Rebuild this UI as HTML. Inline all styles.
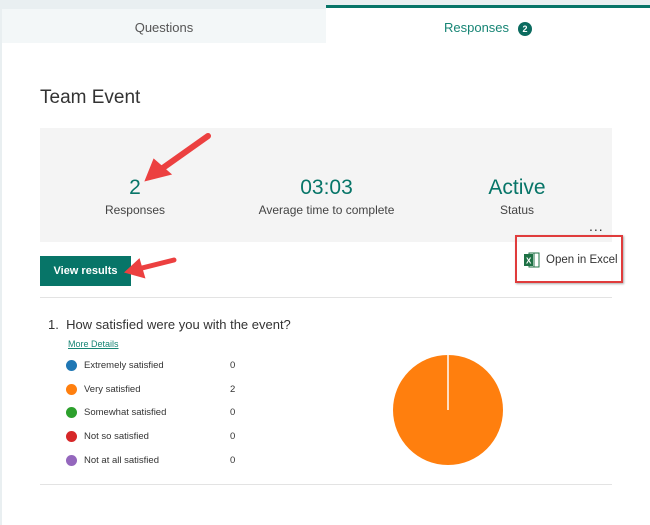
<!DOCTYPE html>
<html><head><style>
body{margin:0;width:650px;height:525px;background:#fff;font-family:"Liberation Sans",sans-serif;position:relative;overflow:hidden}
.a{position:absolute}
.c{text-align:center;color:#333}
.n{font-size:21px;color:#077568}
.l{font-size:12px;color:#444}
.row{position:absolute;left:66px;font-size:9.5px;color:#333}
.dot{display:inline-block;width:11px;height:11px;border-radius:50%;vertical-align:middle;margin-right:7px}
.v{position:absolute;left:164px}
</style></head><body>
<div class="a" style="left:0;top:0;width:650px;height:43px;background:#e9eff1"></div>
<div class="a" style="left:2px;top:9px;width:324px;height:34px;background:#f3f7f8;color:#555;font-size:13px;text-align:center;line-height:38px">Questions</div>
<div class="a" style="left:326px;top:5px;width:324px;height:3px;background:#077568"></div>
<div class="a" style="left:326px;top:8px;width:324px;height:35px;background:#fff;color:#178575;font-size:13px;line-height:40px"><span style="position:absolute;left:118px">Responses</span><span style="position:absolute;left:192px;top:14px;width:14px;height:14px;border-radius:50%;background:#0b6b5f;color:#fff;font-size:9px;font-weight:bold;line-height:14px;text-align:center">2</span></div>
<div class="a" style="left:0;top:43px;width:2px;height:482px;background:#e9eff1"></div>
<div class="a" style="left:40px;top:87px;font-size:19px;color:#333">Team Event</div>
<div class="a" style="left:40px;top:128px;width:572px;height:114px;background:#f4f4f4"></div>
<div class="a c" style="left:60px;top:176px;width:150px"><div class="n">2</div><div class="l" style="margin-top:3px">Responses</div></div>
<div class="a c" style="left:250px;top:176px;width:153px"><div class="n">03:03</div><div class="l" style="margin-top:3px">Average time to complete</div></div>
<div class="a c" style="left:442px;top:176px;width:150px"><div class="n">Active</div><div class="l" style="margin-top:3px">Status</div></div>
<div class="a" style="left:589px;top:218px;font-size:14px;color:#333;letter-spacing:1px">...</div>
<div class="a" style="left:40px;top:256px;width:91px;height:30px;background:#077568;color:#fff;font-size:11px;font-weight:bold;line-height:30px;text-align:center">View results</div>
<div class="a" style="left:515px;top:235px;width:104px;height:44px;border:2px solid #e03c3c;box-shadow:1px 1px 2px #aaa"></div>
<svg class="a" style="left:524px;top:252px" width="16" height="16"><rect x="5" y="1" width="10" height="14" fill="#fff" stroke="#217346"/><line x1="10" y1="1" x2="10" y2="15" stroke="#217346"/><rect x="0" y="2" width="9" height="12" fill="#1e7145"/><text x="2" y="11.5" font-size="8" fill="#fff" font-weight="bold" font-family="Liberation Sans">X</text></svg>
<div class="a" style="left:546px;top:254px;font-size:11.5px;color:#333">Open in Excel</div>
<div class="a" style="left:40px;top:297px;width:572px;height:1px;background:#e3e3e3"></div>
<div class="a" style="left:48px;top:317px;font-size:13px;color:#333">1.&nbsp; How satisfied were you with the event?</div>
<div class="a" style="left:68px;top:339px;font-size:9px;color:#178575;text-decoration:underline">More Details</div>
<div class="row" style="top:360px"><span class="dot" style="background:#1f77b4"></span>Extremely satisfied<span class="v">0</span></div>
<div class="row" style="top:384px"><span class="dot" style="background:#ff7f0e"></span>Very satisfied<span class="v">2</span></div>
<div class="row" style="top:407px"><span class="dot" style="background:#2ca02c"></span>Somewhat satisfied<span class="v">0</span></div>
<div class="row" style="top:431px"><span class="dot" style="background:#d62728"></span>Not so satisfied<span class="v">0</span></div>
<div class="row" style="top:455px"><span class="dot" style="background:#9467bd"></span>Not at all satisfied<span class="v">0</span></div>
<svg class="a" style="left:391px;top:353px" width="116" height="116"><circle cx="57" cy="57" r="55" fill="#ff7f0e"/><line x1="57" y1="2" x2="57" y2="57" stroke="#fff" stroke-width="1.5"/></svg>
<div class="a" style="left:40px;top:484px;width:572px;height:1px;background:#e3e3e3"></div>
<svg class="a" style="left:0;top:0" width="650" height="525">
<g fill="#ec4040" stroke="#ec4040" stroke-linecap="round">
<line x1="208" y1="136" x2="160" y2="170" stroke-width="6"/><polygon points="146,180 154,160 170,174" stroke-width="2"/>
<line x1="174" y1="260" x2="142" y2="268" stroke-width="5"/><polygon points="126,272 139,260 144,277" stroke-width="2"/>
</g></svg>
</body></html>
